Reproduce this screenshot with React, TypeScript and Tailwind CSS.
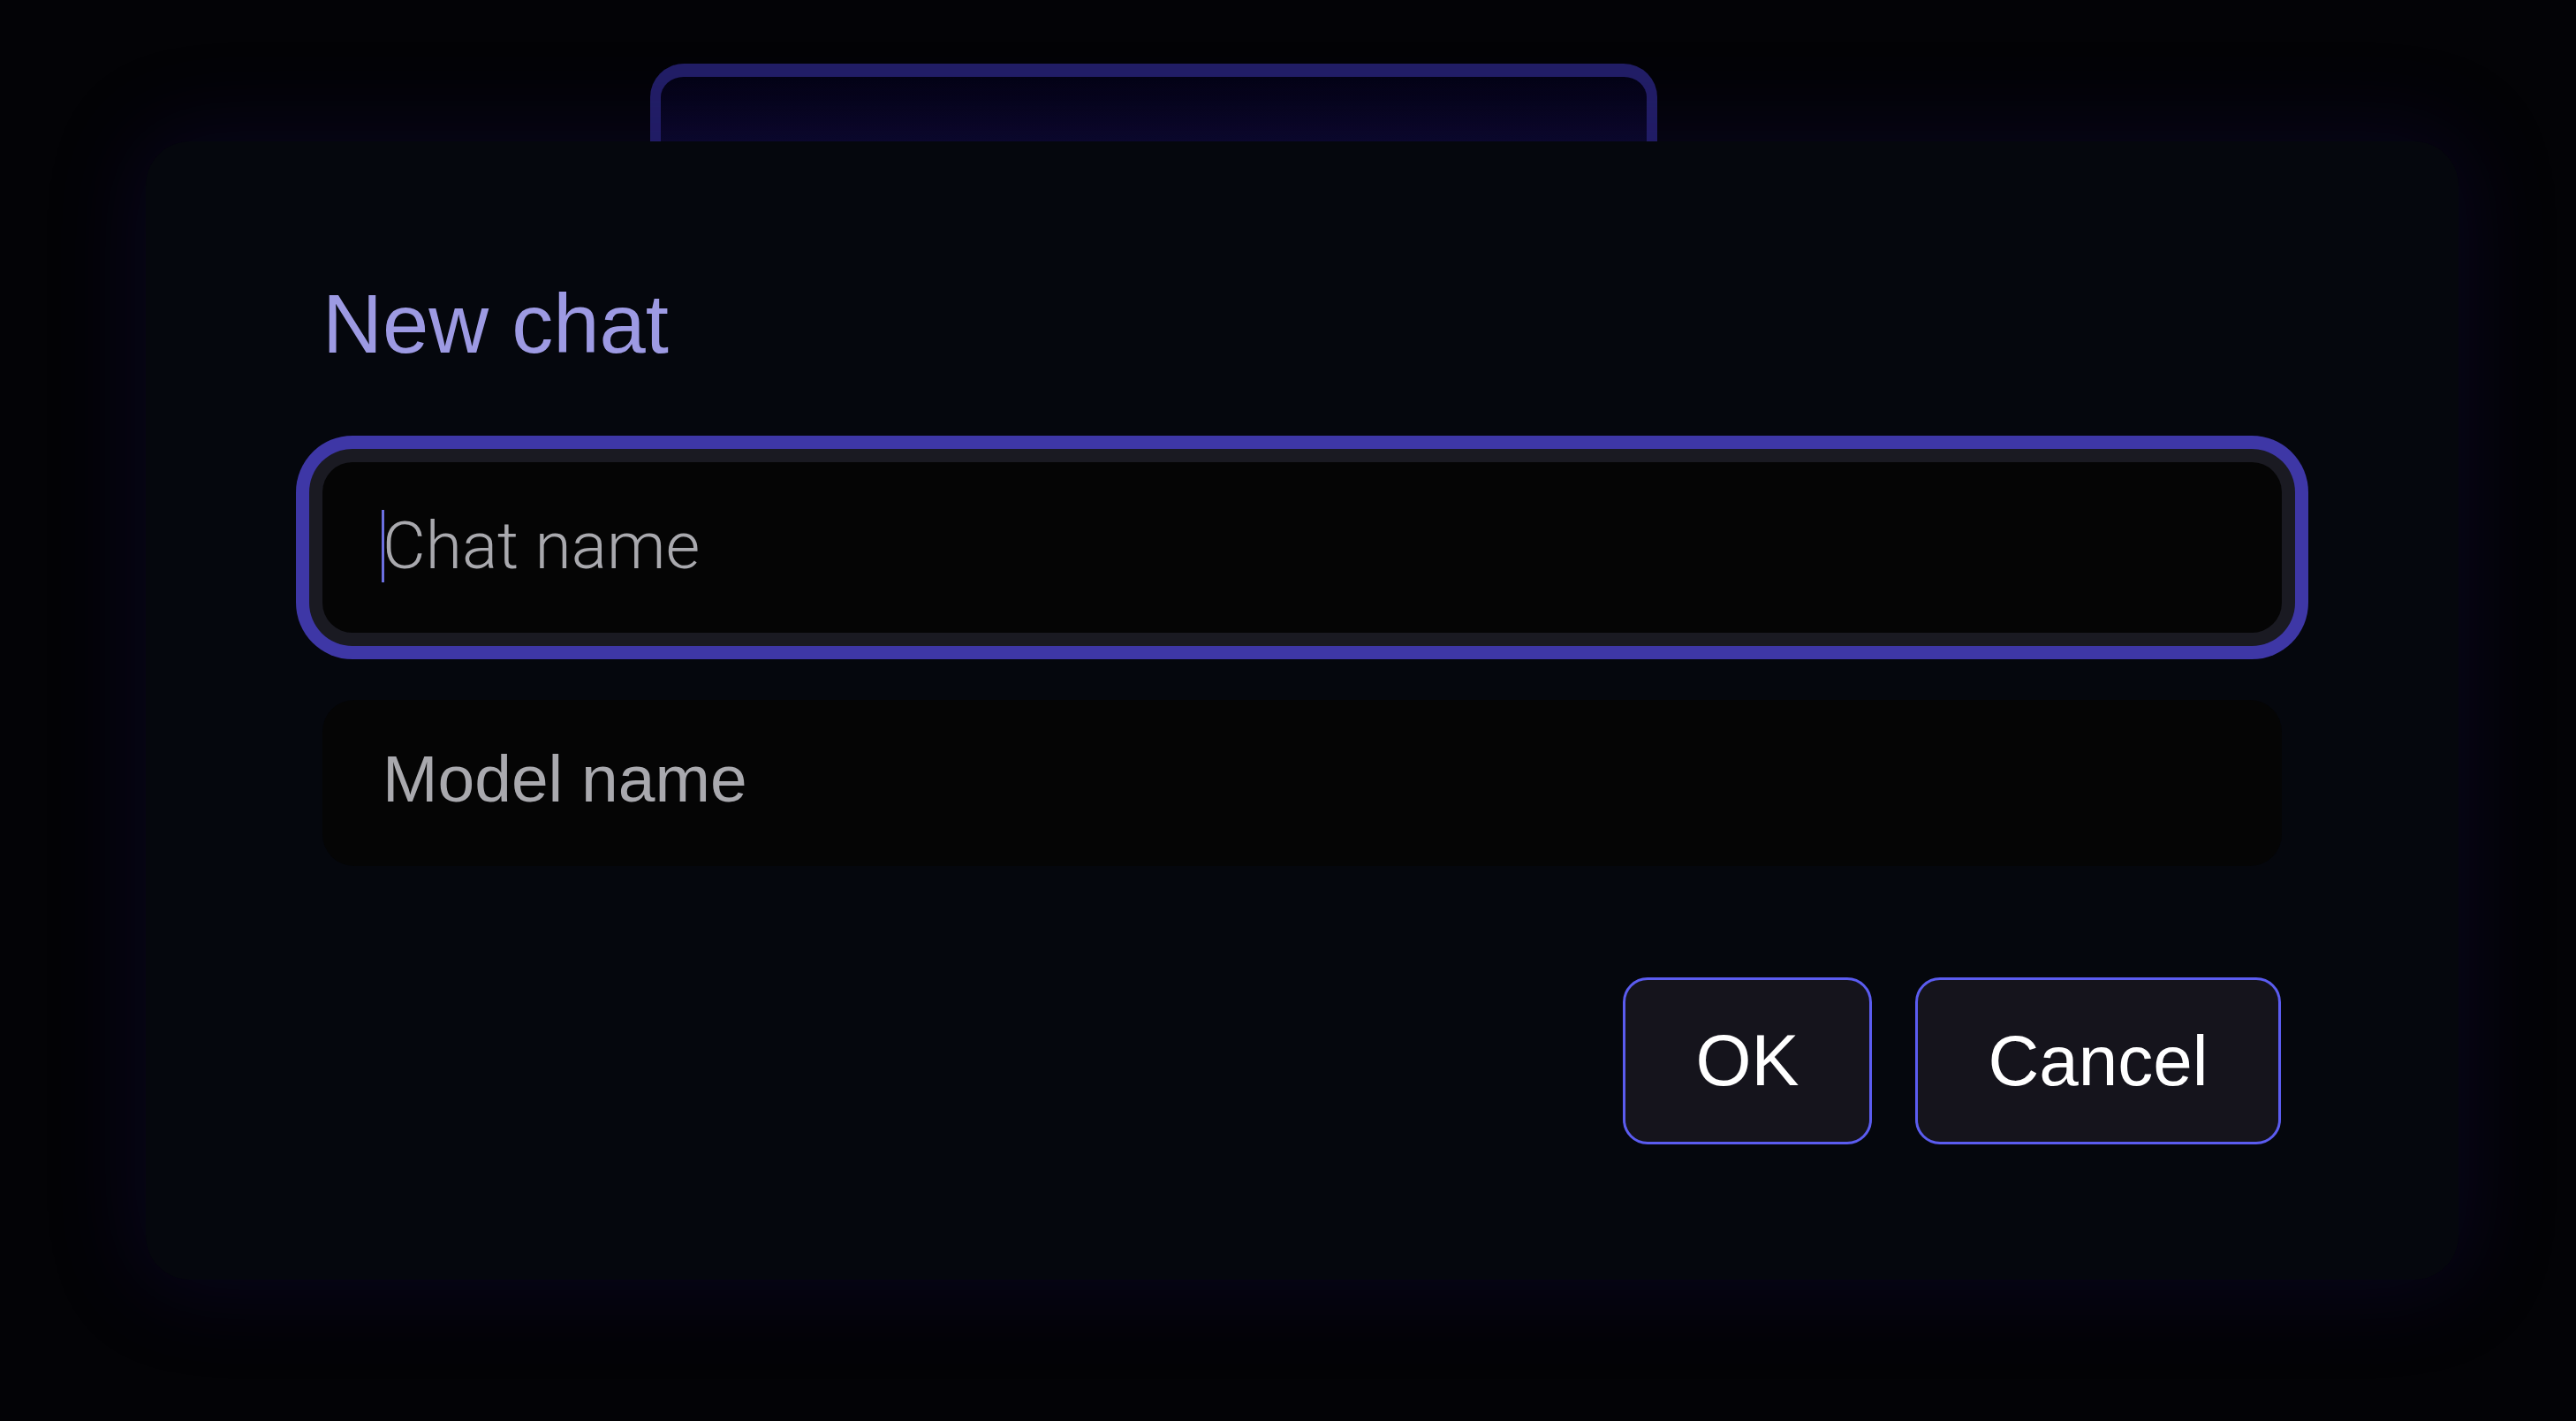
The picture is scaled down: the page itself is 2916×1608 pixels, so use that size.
export default function App() {
  return (
    <div className="min-h-screen w-full overflow-hidden bg-[#030306] pl-[165px] pt-[72px]">
      <div className="w-[2618px]">
        {/* window peeking out behind the dialog */}
        <div className="ml-[571px] h-[88px] w-[1140px] rounded-t-[38px] border-[12px] border-b-0 border-t-[15px] border-[#221e66] bg-gradient-to-b from-[#040314] to-[#090624]" />

        {/* dialog */}
        <div className="flex flex-col rounded-[50px] bg-[#05070d] px-[200px] pb-[153px] pt-[160px] shadow-[0_0_100px_12px_rgba(30,18,100,0.24)]">
          <h1 className="font-['Liberation_Sans',Arial,sans-serif] text-[94px] leading-none text-[#9d9ae3]">
            New chat
          </h1>

          {/* focused field */}
          <div className="mt-[109px] flex h-[193px] items-center rounded-[34px] bg-[#050505] pb-[4px] pl-[67px] shadow-[0_0_0_15px_#1a1a22,0_0_0_30px_#3e37a6]">
            <span className="h-[82px] w-[3px] bg-[#6b6fe0]" />
            <span className="-ml-[2px] font-['Roboto',sans-serif] text-[75px] font-light leading-none text-[#a9a9ae]">
              Chat name
            </span>
          </div>

          <div className="mt-[76px] flex h-[188px] items-center rounded-[36px] bg-[#050505] pb-[10px] pl-[68px]">
            <span className="font-['Liberation_Sans',Arial,sans-serif] text-[75px] leading-none text-[#a9a9ae]">
              Model name
            </span>
          </div>

          {/* actions */}
          <div className="mt-[126px] flex justify-end gap-[49px] font-['Liberation_Sans',Arial,sans-serif]">
            <button className="flex h-[189px] w-[282px] items-center justify-center rounded-[28px] border-[3px] border-[#5b5cf0] bg-[#15141c] text-[81px] leading-none text-white">
              OK
            </button>
            <button className="mr-[1px] flex h-[189px] w-[414px] items-center justify-center rounded-[28px] border-[3px] border-[#5b5cf0] bg-[#15141c] text-[80px] leading-none text-white">
              Cancel
            </button>
          </div>
        </div>
      </div>
    </div>
  );
}
